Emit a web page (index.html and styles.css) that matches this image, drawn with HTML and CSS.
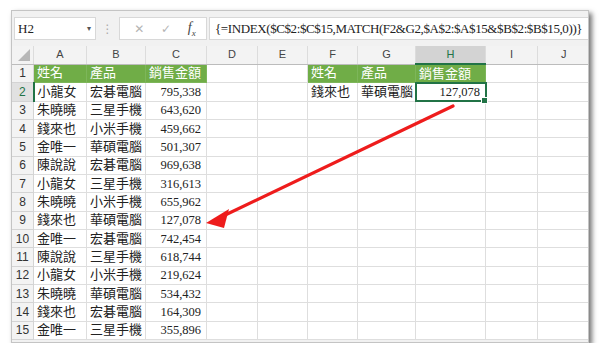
FILE: index.html
```html
<!doctype html>
<html>
    <head>
        <title>INDEX MATCH</title>
        <link rel="stylesheet" href="styles.css">
    </head>
    <body>
        <div class="window">
            <div class="formula-bar">
                <div class="namebox">H2<span class="drop">&#9662;</span></div>
                <div class="dots">&#8942;</div>
                <div class="fxbox">
                    <span class="ico x">&#10005;</span>
                    <span class="ico ok">&#10003;</span>
                    <span class="fx"><i>f</i><sub>x</sub></span>
                </div>
                <div class="formula">{=INDEX($C$2:$C$15,MATCH(F2&amp;G2,$A$2:$A$15&amp;$B$2:$B$15,0))}</div>
            </div>

            <table class="sheet">
                <colgroup>
                    <col style="width:22px"><col style="width:53px"><col style="width:59px"><col style="width:61px">
                    <col style="width:51px"><col style="width:50px"><col style="width:50px"><col style="width:58px">
                    <col style="width:70px"><col style="width:52px"><col style="width:52px">
                </colgroup>
                <tr class="head">
                    <th class="corner"><span class="tri"></span></th>
                    <th>A</th><th>B</th><th>C</th><th>D</th><th>E</th><th>F</th><th>G</th><th class="sel">H</th><th>I</th><th>J</th>
                </tr>
                <tr>
                    <td class="rh">1</td>
                    <td class="g">姓名</td><td class="g">產品</td><td class="g">銷售金額</td><td></td><td></td>
                    <td class="g">姓名</td><td class="g">產品</td><td class="g">銷售金額</td><td></td><td></td>
                </tr>
                <tr>
                    <td class="rh on">2</td>
                    <td>小龍女</td><td>宏碁電腦</td><td class="n">795,338</td><td></td><td></td>
                    <td>錢來也</td><td>華碩電腦</td><td class="n active">127,078<span class="handle"></span></td><td></td><td></td>
                </tr>
                <tr><td class="rh">3</td><td>朱曉曉</td><td>三星手機</td><td class="n">643,620</td><td></td><td></td><td></td><td></td><td></td><td></td><td></td></tr>
                <tr><td class="rh">4</td><td>錢來也</td><td>小米手機</td><td class="n">459,662</td><td></td><td></td><td></td><td></td><td></td><td></td><td></td></tr>
                <tr><td class="rh">5</td><td>金唯一</td><td>華碩電腦</td><td class="n">501,307</td><td></td><td></td><td></td><td></td><td></td><td></td><td></td></tr>
                <tr><td class="rh">6</td><td>陳說說</td><td>宏碁電腦</td><td class="n">969,638</td><td></td><td></td><td></td><td></td><td></td><td></td><td></td></tr>
                <tr><td class="rh">7</td><td>小龍女</td><td>三星手機</td><td class="n">316,613</td><td></td><td></td><td></td><td></td><td></td><td></td><td></td></tr>
                <tr><td class="rh">8</td><td>朱曉曉</td><td>小米手機</td><td class="n">655,962</td><td></td><td></td><td></td><td></td><td></td><td></td><td></td></tr>
                <tr><td class="rh">9</td><td>錢來也</td><td>華碩電腦</td><td class="n">127,078</td><td></td><td></td><td></td><td></td><td></td><td></td><td></td></tr>
                <tr><td class="rh">10</td><td>金唯一</td><td>宏碁電腦</td><td class="n">742,454</td><td></td><td></td><td></td><td></td><td></td><td></td><td></td></tr>
                <tr><td class="rh">11</td><td>陳說說</td><td>三星手機</td><td class="n">618,744</td><td></td><td></td><td></td><td></td><td></td><td></td><td></td></tr>
                <tr><td class="rh">12</td><td>小龍女</td><td>小米手機</td><td class="n">219,624</td><td></td><td></td><td></td><td></td><td></td><td></td><td></td></tr>
                <tr><td class="rh">13</td><td>朱曉曉</td><td>華碩電腦</td><td class="n">534,432</td><td></td><td></td><td></td><td></td><td></td><td></td><td></td></tr>
                <tr><td class="rh">14</td><td>錢來也</td><td>宏碁電腦</td><td class="n">164,309</td><td></td><td></td><td></td><td></td><td></td><td></td><td></td></tr>
                <tr><td class="rh">15</td><td>金唯一</td><td>三星手機</td><td class="n">355,896</td><td></td><td></td><td></td><td></td><td></td><td></td><td></td></tr>
            </table>
        </div>

        <!-- red arrow drawn over the sheet -->
        <svg class="arrow" width="600" height="352" viewBox="0 0 600 352">
            <line x1="453" y1="106" x2="221" y2="217" stroke="#ee1c1c" stroke-width="3.2" stroke-linecap="round"/>
            <polygon points="206,223 229,209 224,228" fill="#ee1c1c"/>
        </svg>
    </body>
</html>
```

FILE: styles.css
```css
body{
    margin: 0;
    background: #fff;
    font-family: "Liberation Serif", "Noto Sans CJK TC", serif;
}
.window{
    margin: 10px 0 0 11px;
    width: 578px;
    height: 333px;
    box-sizing: border-box;
    background: #f1f1f1;
    border: 1px solid #c4c4c4;
    box-shadow: 3px 3px 5px rgba(0,0,0,0.55);
    overflow: hidden;
}

/* formula bar */
.formula-bar{
    display: flex;
    align-items: center;
    height: 35px;
    padding: 0 0 0 2px;
}
.namebox{
    flex: none;
    width: 73px;
    height: 21px;
    background: #fff;
    border: 1px solid #d8d8d8;
    display: flex;
    align-items: center;
    justify-content: space-between;
    padding: 0 4px 0 3px;
    font-size: 13px;
    color: #222;
}
.drop{
    font-family: "DejaVu Sans", sans-serif;
    font-size: 8px;
    color: #555;
}
.dots{
    flex: none;
    width: 23px;
    text-align: center;
    color: #aaa;
    font-family: "DejaVu Sans", sans-serif;
    font-size: 12px;
}
.fxbox{
    flex: none;
    width: 78px;
    height: 21px;
    background: #fff;
    border: 1px solid #d8d8d8;
    display: flex;
    align-items: center;
    justify-content: space-around;
    padding: 0 2px 0 6px;
}
.ico{
    font-family: "DejaVu Sans", sans-serif;
    font-size: 12px;
    color: #b4b4b4;
}
.fx{
    font-family: "Liberation Serif", serif;
    font-size: 14px;
    color: #444;
}
.fx sub{
    font-size: 9px;
    font-style: italic;
}
.formula{
    flex: 1;
    min-width: 0;
    overflow: hidden;
    height: 21px;
    margin-left: 2px;
    background: #fff;
    border: 1px solid #d8d8d8;
    border-right: none;
    display: flex;
    align-items: center;
    padding-left: 5px;
    font-size: 13px;
    letter-spacing: -0.4px;
    color: #222;
    white-space: nowrap;
}

/* sheet */
.sheet{
    border-collapse: collapse;
    table-layout: fixed;
    width: 578px;
    background: #fff;
    margin-left: -1px;
}
.sheet th{
    height: 17px;
    padding: 0;
    line-height: 15px;
    background: #f3f3f3;
    border-left: 1px solid #dcdcdc;
    border-bottom: 1px solid #bcbcbc;
    font-family: "Liberation Sans", sans-serif;
    font-weight: normal;
    font-size: 11px;
    color: #444;
}
.sheet th.sel{
    background: #d3d3d3;
    border-bottom: 2px solid #217346;
    color: #217346;
}
.corner{
    position: relative;
}
.tri{
    position: absolute;
    right: 3px;
    bottom: 3px;
    width: 0;
    height: 0;
    border-left: 12px solid transparent;
    border-bottom: 12px solid #b7b7b7;
}
.sheet td{
    height: 17.33px;
    padding: 0 0 0 3px;
    line-height: 16px;
    border: 1px solid #dedede;
    font-size: 13px;
    color: #222;
    white-space: nowrap;
    overflow: hidden;
}
.sheet td.rh{
    padding: 0;
    background: #f3f3f3;
    border-color: #d4d4d4;
    text-align: center;
    font-family: "Liberation Sans", sans-serif;
    font-size: 12px;
    color: #333;
}
.sheet td.rh.on{
    background: #e1e1e1;
    border-right: 2px solid #217346;
    color: #217346;
}
.sheet td.g{
    background: #70ad47;
    border-color: #7db65a;
    color: #fff;
}
.sheet td.n{
    text-align: right;
    padding: 0 5px 0 0;
    font-size: 12.5px;
}
.sheet td.active{
    position: relative;
    overflow: visible;
    outline: 2px solid #217346;
    outline-offset: -1px;
}
.handle{
    position: absolute;
    right: -3px;
    bottom: -3px;
    width: 5px;
    height: 5px;
    background: #217346;
    border: 1px solid #fff;
}

.arrow{
    position: absolute;
    left: 0;
    top: 0;
}
```
